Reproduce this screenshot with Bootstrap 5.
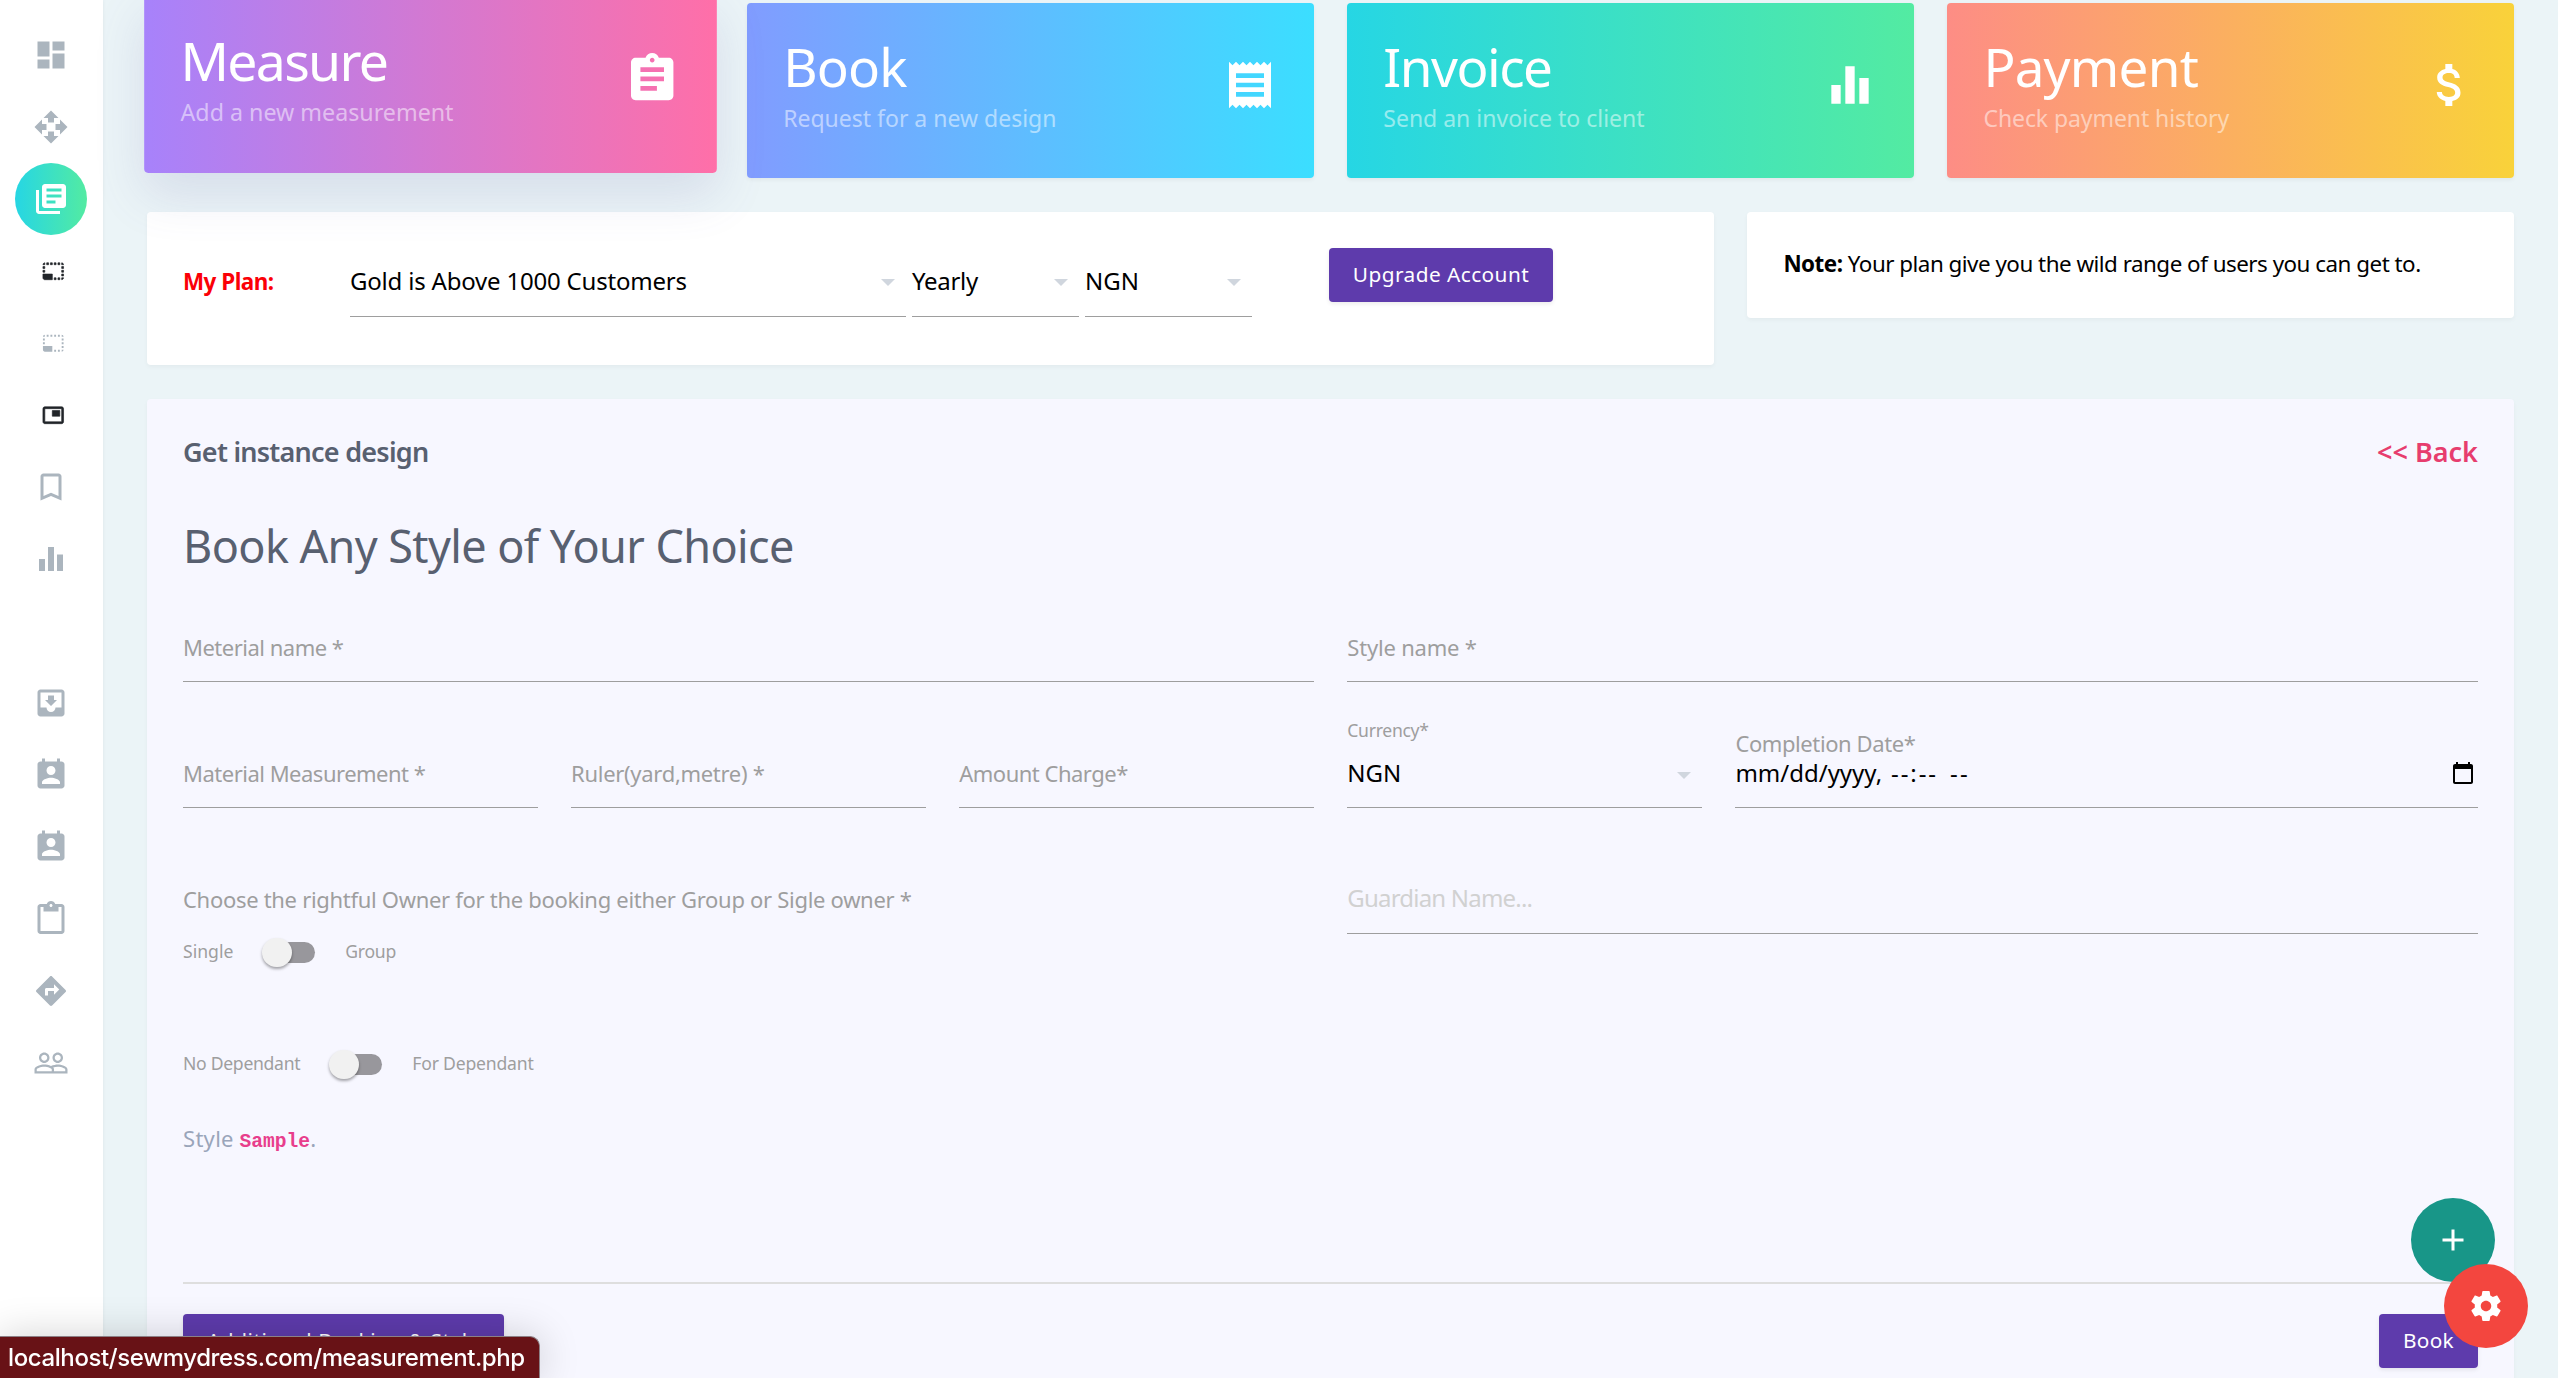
<!DOCTYPE html>
<html lang="en">
<head>
<meta charset="utf-8">
<title>Sew My Dress</title>
<link rel="stylesheet" href="https://cdn.jsdelivr.net/npm/bootstrap@5.3.0/dist/css/bootstrap.min.css">
<script src="https://cdn.jsdelivr.net/npm/bootstrap@5.3.0/dist/js/bootstrap.bundle.min.js"></script>
<style>
html,body{height:1378px;overflow:hidden}
body{background:#ebf4f7;font-family:"Noto Sans","Open Sans",sans-serif;font-size:22px;line-height:30px;color:#9e9e9e}
svg{fill:currentColor;display:block;flex:none}
.row{--bs-gutter-x:33.6px}
.side{width:103px;padding:19px 2px 0 0;color:#abb5be;box-shadow:0 0 4px rgba(0,0,0,.06)}
.side a{width:72px;height:72px;color:inherit}
.side a svg{width:36px;height:36px}
.side .mini svg{width:22.5px;height:22.5px;margin-left:6px}
.side .dark{color:#212529}
.side .dark svg{stroke:currentColor;stroke-width:.7;overflow:visible}
.side .now{color:#fff;border-radius:50%;background:linear-gradient(90deg,#26d6e4,#53eba2)}
.main-area{padding:3px 44px 0}
.tile{height:175px;border-radius:4px;padding:33.5px 36px 0 36px;color:#fff;box-shadow:0 2px 4px rgba(0,0,0,.05)}
.tile h2{font-size:53px;line-height:60px;font-weight:400;margin:0 0 6.5px}
.tile p{font-size:23px;color:rgba(255,255,255,.52);margin:0}
.tile svg{width:56px;height:56px;margin-top:20.5px}
.g-measure{background:linear-gradient(90deg,#a782fb,#ff6fa8);transform:translateY(-6px) scale(1.01);box-shadow:0 20px 50px rgba(100,100,170,.16)}
.g-book{background:linear-gradient(90deg,#819cff,#3bdeff)}
.g-invoice{background:linear-gradient(90deg,#26d6e4,#53eba2)}
.g-pay{background:linear-gradient(90deg,#fd8d85,#f9d23a)}
.panel{border-radius:4px;background:#fff;box-shadow:0 2px 4px rgba(0,0,0,.04)}
.plans{margin-top:34px}
.plan{height:153px;padding:36px 36px 0}
.plan-label{width:167px;margin-top:19px;font-size:22.4px;color:#fb0007}
.plan-selects{gap:6px;margin:15px 77px 0 0}
.line{height:50px;border-bottom:1px solid #9e9e9e;white-space:nowrap}
.pick{font-size:24px;line-height:30px;color:#000;padding-right:11px}
.pick::after{content:"";border:7.3px solid transparent;border-top:7.5px solid #d0d6de;border-bottom:0;margin-top:14px}
.plan .line{height:54px;padding-top:3px}
.plan .pick::after{margin-top:13px}
.w-plan{width:556px}.w-opt{width:167px}
.purple{height:54px;border-radius:4px;background:#5e3bac;color:#fff;font-size:20.8px;line-height:52px;padding:0 24px 2px;border:0;white-space:nowrap;box-shadow:0 2px 4px rgba(0,0,0,.08)}
.purple.w-upgrade{width:224px;padding:0 0 2px}
.purple.w-extra{width:321px;padding:0 0 2px}
.note{height:106px;padding:37px 36px 0;font-size:22.4px;color:#000;white-space:nowrap}
.booking{margin-top:34px;height:1000px;background:#f7f7ff;padding:36px 36px 0}
.t-head,.t-back{font-size:27px;line-height:34px;font-weight:600;color:#586070}
.t-back{color:#e73d6e}
.t-title{font-size:45px;line-height:60px;font-weight:400;color:#586070;margin:47px 0 56px}
.row-two{margin-top:36px}
.row-three{margin-top:76px}
.tiny{font-size:17.6px;line-height:24px}
.when{font-size:24px;line-height:29px;color:#000}
.when svg{margin:3px 3px 0 auto}
.time-part{margin-left:9px;letter-spacing:1.9px}
.half-part{margin-left:12px;letter-spacing:2.4px}
.ghost{font-size:24px;color:#d1d1d1;line-height:28px}
.switches{height:30px;line-height:30px;font-size:17.6px}
.first-switch{margin-top:22px}
.second-switch{margin-top:82px}
.toggle{width:53px;height:21px;margin:3px 30px 0 29px;padding-left:3px}
.toggle i{display:block;width:50px;height:21px;border-radius:11px;background:#98979c}
.toggle b{position:absolute;left:0;top:-4.5px;width:29.5px;height:29.5px;border-radius:50%;background:#f1f1f1;box-shadow:0 2px 3px rgba(0,0,0,.35)}
.sample{margin-top:45px;height:30px;color:#9aa5ba}
.rule{border-top:2px solid #dedede;margin:129px 0 30px}
code{font-family:"Liberation Mono",monospace;font-size:19.6px;font-weight:700;color:#e83e8c;line-height:1}
.fab{position:fixed;width:84px;height:84px;border-radius:50%;color:#fff}
.fab-add{left:2411px;top:1198px;background:#189688}
.fab-set{left:2444px;top:1264px;background:#f3463f}
.fab svg{width:36px;height:36px}
.status{position:fixed;left:0;bottom:0;height:42px;width:540px;background:#681216;border:1px solid #8c8086;border-left:0;border-bottom:0;border-radius:0 10px 0 0;color:#fff;font:500 24px/41px Inter,sans-serif;letter-spacing:-.39px;padding-left:8px;white-space:nowrap;box-shadow:0 0 40px rgba(0,0,0,.18)}
/* letter-spacing steps */
.k18{letter-spacing:-1.7px}.k15{letter-spacing:-1.5px}.k8{letter-spacing:-.8px}.k75{letter-spacing:-.75px}.k6{letter-spacing:-.6px}.k5{letter-spacing:-.5px}.k4{letter-spacing:-.4px}.k3{letter-spacing:-.3px}.k2{letter-spacing:-.2px}.k1{letter-spacing:-.08px}.p3{letter-spacing:.3px}.p45{letter-spacing:.45px}.p55{letter-spacing:.56px}
</style>
</head>
<body>
<svg width="0" height="0" class="position-absolute">
<symbol id="dash" viewBox="0 0 24 24"><path d="M3 13h8V3H3v10zm0 8h8v-6H3v6zm10 0h8V11h-8v10zm0-18v6h8V3h-8z"/></symbol>
<symbol id="move" viewBox="0 0 24 24"><path d="M10 9h4V6h3l-5-5-5 5h3v3zm-1 1H6V7l-5 5 5 5v-3h3v-4zm14 2l-5-5v3h-3v4h3v3l5-5zm-9 3h-4v3H7l5 5 5-5h-3v-3z"/></symbol>
<symbol id="books" viewBox="0 0 24 24"><path d="M4 6H2v14c0 1.1.9 2 2 2h14v-2H4V6zm16-4H8c-1.1 0-2 .9-2 2v12c0 1.1.9 2 2 2h12c1.1 0 2-.9 2-2V4c0-1.1-.9-2-2-2zm-1 9H9V9h10v2zm-4 4H9v-2h6v2zm4-8H9V5h10v2z"/></symbol>
<symbol id="small-size" viewBox="0 0 24 24"><path d="M23 15h-2v2h2v-2zm0-4h-2v2h2v-2zm0 8h-2v2c1 0 2-1 2-2zM15 3h-2v2h2V3zm8 4h-2v2h2V7zm-2-4v2h2c0-1-1-2-2-2zM3 21h8v-6H1v4c0 1.1.9 2 2 2zM3 7H1v2h2V7zm12 12h-2v2h2v-2zm4-16h-2v2h2V3zm0 16h-2v2h2v-2zM3 3C2 3 1 4 1 5h2V3zm0 8H1v2h2v-2zm8-8H9v2h2V3zM7 3H5v2h2V3z"/></symbol>
<symbol id="pip" viewBox="0 0 24 24"><path d="M19 7h-8v6h8V7zm2-4H3c-1.1 0-2 .9-2 2v14c0 1.1.9 1.98 2 1.98h18c1.1 0 2-.88 2-1.98V5c0-1.1-.9-2-2-2zm0 16.01H3V4.98h18v14.03z"/></symbol>
<symbol id="bookmark" viewBox="0 0 24 24"><path d="M17 3H7c-1.1 0-1.99.9-1.99 2L5 21l7-3 7 3V5c0-1.1-.9-2-2-2zm0 15l-5-2.18L7 18V5h10v13z"/></symbol>
<symbol id="bars" viewBox="0 0 24 24"><path d="M10 20h4V4h-4v16zm-6 0h4v-8H4v8zM16 9v11h4V9h-4z"/></symbol>
<symbol id="inbox" viewBox="0 0 24 24"><path d="M19 3H4.99c-1.11 0-1.98.9-1.98 2L3 19c0 1.1.88 2 1.99 2H19c1.1 0 2-.9 2-2V5c0-1.1-.9-2-2-2zm0 12h-4c0 1.66-1.35 3-3 3s-3-1.34-3-3H4.99V5H19v10zm-3-5h-2V7h-4v3H8l4 4 4-4z"/></symbol>
<symbol id="contact" viewBox="0 0 24 24"><path d="M19 3h-1V1h-2v2H8V1H6v2H5c-1.11 0-2 .9-2 2v14c0 1.1.89 2 2 2h14c1.1 0 2-.9 2-2V5c0-1.1-.9-2-2-2zm-7 3c1.66 0 3 1.34 3 3s-1.34 3-3 3-3-1.34-3-3 1.34-3 3-3zm6 12H6v-1c0-2 4-3.1 6-3.1s6 1.1 6 3.1v1z"/></symbol>
<symbol id="paste" viewBox="0 0 24 24"><path d="M19 2h-4.18C14.4.84 13.3 0 12 0c-1.3 0-2.4.84-2.82 2H5c-1.1 0-2 .9-2 2v16c0 1.1.9 2 2 2h14c1.1 0 2-.9 2-2V4c0-1.1-.9-2-2-2zm-7 0c.55 0 1 .45 1 1s-.45 1-1 1-1-.45-1-1 .45-1 1-1zm7 18H5V4h2v3h10V4h2v16z"/></symbol>
<symbol id="turn" viewBox="0 0 24 24"><path d="M21.71 11.29l-9-9c-.39-.39-1.02-.39-1.41 0l-9 9c-.39.39-.39 1.02 0 1.41l9 9c.39.39 1.02.39 1.41 0l9-9c.39-.38.39-1.01 0-1.41zM14 14.5V12h-4v3H8v-4c0-.55.45-1 1-1h5V7.5l3.5 3.5-3.5 3.5z"/></symbol>
<symbol id="people" viewBox="0 0 24 24"><path d="M16.5 13c-1.2 0-3.07.34-4.5 1-1.43-.67-3.3-1-4.5-1C5.33 13 1 14.08 1 16.25V19h22v-2.75c0-2.17-4.33-3.25-6.5-3.25zm-4 4.5h-10v-1.25c0-.54 2.56-1.75 5-1.75s5 1.21 5 1.75v1.25zm9 0H14v-1.25c0-.46-.2-.86-.52-1.22.88-.3 1.96-.53 3.02-.53 2.44 0 5 1.21 5 1.75v1.25zM7.5 12c1.93 0 3.5-1.57 3.5-3.5S9.43 5 7.5 5 4 6.57 4 8.5 5.57 12 7.5 12zm0-5.5c1.1 0 2 .9 2 2s-.9 2-2 2-2-.9-2-2 .9-2 2-2zm9 5.5c1.93 0 3.5-1.57 3.5-3.5S18.43 5 16.5 5 13 6.57 13 8.5s1.57 3.5 3.5 3.5zm0-5.5c1.1 0 2 .9 2 2s-.9 2-2 2-2-.9-2-2 .9-2 2-2z"/></symbol>
<symbol id="task" viewBox="0 0 24 24"><path d="M19 3h-4.18C14.4 1.84 13.3 1 12 1c-1.3 0-2.4.84-2.82 2H5c-1.1 0-2 .9-2 2v14c0 1.1.9 2 2 2h14c1.1 0 2-.9 2-2V5c0-1.1-.9-2-2-2zm-7 0c.55 0 1 .45 1 1s-.45 1-1 1-1-.45-1-1 .45-1 1-1zm2 14H7v-2h7v2zm3-4H7v-2h10v2zm0-4H7V7h10v2z"/></symbol>
<symbol id="receipt" viewBox="0 0 24 24"><path d="M18 17H6v-2h12v2zm0-4H6v-2h12v2zm0-4H6V7h12v2zM3 22l1.5-1.5L6 22l1.5-1.5L9 22l1.5-1.5L12 22l1.5-1.5L15 22l1.5-1.5L18 22l1.5-1.5L21 22V2l-1.5 1.5L18 2l-1.5 1.5L15 2l-1.5 1.5L12 2l-1.5 1.5L9 2 7.5 3.5 6 2 4.5 3.5 3 2v20z"/></symbol>
<symbol id="money" viewBox="0 0 24 24"><path d="M11.8 10.9c-2.27-.59-3-1.2-3-2.15 0-1.09 1.01-1.85 2.7-1.85 1.78 0 2.44.85 2.5 2.1h2.21c-.07-1.72-1.12-3.3-3.21-3.81V3h-3v2.16c-1.94.42-3.5 1.68-3.5 3.61 0 2.31 1.91 3.46 4.7 4.13 2.5.6 3 1.48 3 2.41 0 .69-.49 1.79-2.7 1.79-2.06 0-2.87-.92-2.98-2.1h-2.2c.12 2.19 1.76 3.42 3.68 3.83V21h3v-2.15c1.95-.37 3.5-1.5 3.5-3.55 0-2.84-2.43-3.81-4.7-4.4z"/></symbol>
<symbol id="gear" viewBox="0 0 24 24"><path d="M19.43 12.98c.04-.32.07-.64.07-.98s-.03-.66-.07-.98l2.11-1.65c.19-.15.24-.42.12-.64l-2-3.46c-.12-.22-.39-.3-.61-.22l-2.49 1c-.52-.4-1.08-.73-1.69-.98l-.38-2.65C14.46 2.18 14.25 2 14 2h-4c-.25 0-.46.18-.49.42l-.38 2.65c-.61.25-1.17.59-1.69.98l-2.49-1c-.23-.09-.49 0-.61.22l-2 3.46c-.13.22-.07.49.12.64l2.11 1.65c-.04.32-.07.65-.07.98s.03.66.07.98l-2.11 1.65c-.19.15-.24.42-.12.64l2 3.46c.12.22.39.3.61.22l2.49-1c.52.4 1.08.73 1.69.98l.38 2.65c.03.24.24.42.49.42h4c.25 0 .46-.18.49-.42l.38-2.65c.61-.25 1.17-.59 1.69-.98l2.49 1c.23.09.49 0 .61-.22l2-3.46c.12-.22.07-.49-.12-.64l-2.11-1.65zM12 15.5c-1.93 0-3.5-1.57-3.5-3.5s1.57-3.5 3.5-3.5 3.5 1.57 3.5 3.5-1.57 3.5-3.5 3.5z"/></symbol>
<symbol id="plus" viewBox="0 0 24 24"><path d="M19 13h-6v6h-2v-6H5v-2h6V5h2v6h6v2z"/></symbol>
<symbol id="cal" viewBox="0 0 24 24"><path d="M20 3h-1V1h-2v2H7V1H5v2H4c-1.1 0-2 .9-2 2v16c0 1.1.9 2 2 2h16c1.1 0 2-.9 2-2V5c0-1.1-.9-2-2-2zm0 18H4V8h16v13z"/></symbol>
</svg>
<div class="d-flex vh-100">
  <nav class="side bg-white flex-shrink-0 d-flex flex-column align-items-center">
    <a class="d-flex align-items-center justify-content-center"><svg><use href="#dash"/></svg></a>
    <a class="d-flex align-items-center justify-content-center"><svg><use href="#move"/></svg></a>
    <a class="now d-flex align-items-center justify-content-center"><svg><use href="#books"/></svg></a>
    <a class="mini dark d-flex align-items-center justify-content-center"><svg><use href="#small-size"/></svg></a>
    <a class="mini d-flex align-items-center justify-content-center"><svg><use href="#small-size"/></svg></a>
    <a class="mini dark d-flex align-items-center justify-content-center"><svg><use href="#pip"/></svg></a>
    <a class="d-flex align-items-center justify-content-center"><svg><use href="#bookmark"/></svg></a>
    <a class="d-flex align-items-center justify-content-center"><svg><use href="#bars"/></svg></a>
    <a></a>
    <a class="d-flex align-items-center justify-content-center"><svg><use href="#inbox"/></svg></a>
    <a class="d-flex align-items-center justify-content-center"><svg><use href="#contact"/></svg></a>
    <a class="d-flex align-items-center justify-content-center"><svg><use href="#contact"/></svg></a>
    <a class="d-flex align-items-center justify-content-center"><svg><use href="#paste"/></svg></a>
    <a class="d-flex align-items-center justify-content-center"><svg><use href="#turn"/></svg></a>
    <a class="d-flex align-items-center justify-content-center"><svg><use href="#people"/></svg></a>
  </nav>
  <main class="main-area flex-grow-1">
    <div class="row">
      <div class="col-3"><div class="tile g-measure d-flex justify-content-between"><div><h2 class="k18">Measure</h2><p>Add a new measurement</p></div><svg><use href="#task"/></svg></div></div>
      <div class="col-3"><div class="tile g-book d-flex justify-content-between"><div><h2 class="k8">Book</h2><p>Request for a new design</p></div><svg><use href="#receipt"/></svg></div></div>
      <div class="col-3"><div class="tile g-invoice d-flex justify-content-between"><div><h2 class="k15">Invoice</h2><p>Send an invoice to client</p></div><svg><use href="#bars"/></svg></div></div>
      <div class="col-3"><div class="tile g-pay d-flex justify-content-between"><div><h2 class="k8">Payment</h2><p class="k1">Check payment history</p></div><svg><use href="#money"/></svg></div></div>
    </div>
    <div class="row plans">
      <div class="col-8">
        <div class="panel plan d-flex">
          <div class="plan-label fw-bold k5">My Plan:</div>
          <div class="plan-selects d-flex">
            <div class="line pick w-plan d-flex justify-content-between k2">Gold is Above 1000 Customers</div>
            <div class="line pick w-opt d-flex justify-content-between k3">Yearly</div>
            <div class="line pick w-opt d-flex justify-content-between">NGN</div>
          </div>
          <button class="purple w-upgrade p45">Upgrade Account</button>
        </div>
      </div>
      <div class="col-4"><div class="panel note k5"><strong>Note:</strong> Your plan give you the wild range of users you can get to.</div></div>
    </div>
    <section class="panel booking">
      <div class="d-flex justify-content-between"><div class="t-head k75">Get instance design</div><div class="t-back">&lt;&lt; Back</div></div>
      <h1 class="t-title k6">Book Any Style of Your Choice</h1>
      <div class="row">
        <div class="col-6"><div class="line k5">Meterial name *</div></div>
        <div class="col-6"><div class="line k2">Style name *</div></div>
      </div>
      <div class="row row-two align-items-end">
        <div class="col-2"><div class="line k5">Material Measurement *</div></div>
        <div class="col-2"><div class="line k3">Ruler(yard,metre) *</div></div>
        <div class="col-2"><div class="line k5">Amount Charge*</div></div>
        <div class="col-2"><div class="tiny mb-3 k3">Currency*</div><div class="line pick d-flex justify-content-between">NGN</div></div>
        <div class="col-4"><div class="k4">Completion Date*</div><div class="line when d-flex"><span>mm/dd/yyyy,</span><span class="time-part">--:--</span><span class="half-part">--</span><svg width="24" height="24"><use href="#cal"/></svg></div></div>
      </div>
      <div class="row row-three">
        <div class="col-6">
          <div class="k3">Choose the rightful Owner for the booking either Group or Sigle owner *</div>
          <div class="switches first-switch d-flex align-items-center"><span>Single</span><span class="toggle position-relative"><i></i><b></b></span><span class="k3">Group</span></div>
          <div class="switches second-switch d-flex align-items-center"><span class="k3">No Dependant</span><span class="toggle position-relative"><i></i><b></b></span><span class="k2">For Dependant</span></div>
        </div>
        <div class="col-6"><div class="line ghost k8">Guardian Name...</div></div>
      </div>
      <div class="sample"><span class="p3">Style</span> <code>Sample</code>.</div>
      <div class="rule"></div>
      <div class="d-flex justify-content-between"><button class="purple w-extra p55">Additional Booking &amp; Style</button><button class="purple p3">Book</button></div>
    </section>
  </main>
</div>
<div class="fab fab-add d-flex align-items-center justify-content-center"><svg><use href="#plus"/></svg></div>
<div class="fab fab-set d-flex align-items-center justify-content-center"><svg><use href="#gear"/></svg></div>
<div class="status">localhost/sewmydress.com/measurement.php</div>
</body>
</html>
